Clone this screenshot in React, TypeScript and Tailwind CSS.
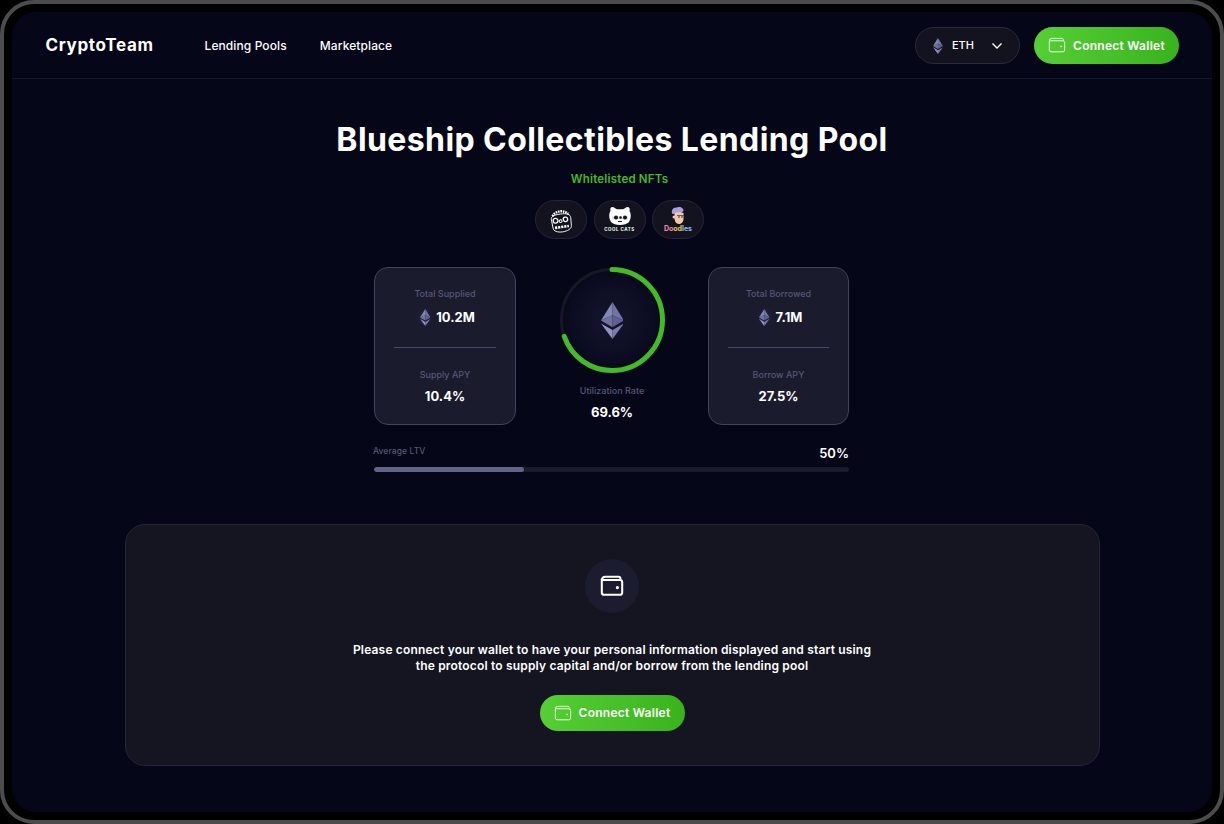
const F = { fontFamily: '"Inter", "Noto Sans", sans-serif' };

function Eth({ size }: { size: number }) {
  return (
    <svg width={size * 0.62} height={size} viewBox="0 0 62 100" className="shrink-0">
      <polygon points="31,0 0,50 31,36" fill="#8487b4" />
      <polygon points="31,0 62,50 31,36" fill="#7275a3" />
      <polygon points="0,50 31,36 31,68" fill="#6f72a0" />
      <polygon points="62,50 31,36 31,68" fill="#5d6090" />
      <polygon points="0,58 31,76 31,100" fill="#9295c2" />
      <polygon points="62,58 31,76 31,100" fill="#7a7dab" />
    </svg>
  );
}

function Wallet({ size = 18, sw = 1.4, color = "#ffffff" }: { size?: number; sw?: number; color?: string }) {
  return (
    <svg width={size} height={size * 0.9} viewBox="0 0 20 18" fill="none" stroke={color} strokeWidth={sw} className="shrink-0">
      <path d="M1.5 4.2V14.5A2 2 0 0 0 3.5 16.5H16.5A2 2 0 0 0 18.5 14.5V6.2A2 2 0 0 0 16.5 4.2H1.5Z" />
      <path d="M1.5 4.2A2.7 2.7 0 0 1 4.2 1.5H15.5A1.5 1.5 0 0 1 17 3V4.2" />
      <circle cx="14.5" cy="10.5" r="0.5" fill={color} />
    </svg>
  );
}

function ConnectButton({ h }: { h: string }) {
  return (
    <div className={`flex w-[145px] items-center justify-center gap-[7px] rounded-full bg-gradient-to-r from-[#56cf36] to-[#39b31c] text-[12px] font-semibold tracking-[0.25px] text-white ${h}`}>
      <Wallet size={18} sw={1.1} color="#e6f9de" />
      <span>Connect Wallet</span>
    </div>
  );
}

function Stat({ label, value, eth = false, gap }: { label: string; value: string; eth?: boolean; gap: string }) {
  return (
    <div className="flex flex-col items-center">
      <div className="text-[9px] font-medium leading-[12px] text-[#555778]">{label}</div>
      <div className={`flex items-center justify-center text-[13px] font-bold leading-[18px] text-white ${gap} ${eth ? "gap-[3px] pl-[2px]" : ""}`}>
        {eth && (
          <span className="flex h-[24px] w-[16px] items-center justify-center rounded-full bg-[radial-gradient(circle,#20213a_0%,#1a1b2c_70%)]">
            <Eth size={17} />
          </span>
        )}
        <span>{value}</span>
      </div>
    </div>
  );
}

function StatCard({ a, b, c, d, w }: { a: string; b: string; c: string; d: string; w: string }) {
  return (
    <div className={`flex h-[158px] flex-col items-center rounded-[14px] border border-[#41435f] bg-[#1a1b2c] px-[19px] pt-[20px] ${w}`}>
      <Stat label={a} value={b} eth gap="mt-[5px]" />
      <div className="mt-[18px] h-px w-full bg-[#45476a]" />
      <div className="mt-[21px]">
        <Stat label={c} value={d} gap="mt-[6px]" />
      </div>
    </div>
  );
}

function Ring() {
  const r = 50.5;
  const c = 2 * Math.PI * r;
  return (
    <div className="relative flex h-[106px] w-[106px] items-center justify-center rounded-full bg-[radial-gradient(circle,#15162e_0%,#0b0c21_55%,#050617_75%)]">
      <svg width="106" height="106" viewBox="0 0 106 106" className="absolute inset-0 -rotate-90">
        <circle cx="53" cy="53" r={r} fill="none" stroke="#171825" strokeWidth="3" />
        <circle cx="53" cy="53" r={r} fill="none" stroke="#42bb26" strokeWidth="5" strokeLinecap="round" strokeDasharray={`${c * 0.696} ${c}`} />
      </svg>
      <Eth size={37} />
    </div>
  );
}

function NftPill({ children }: { children: React.ReactNode }) {
  return (
    <div className="flex h-[39px] w-[52px] flex-col items-center justify-center rounded-full border border-[#24253a] bg-[#12131f]">
      {children}
    </div>
  );
}

export default function App() {
  return (
    <div style={F} className="h-[824px] w-[1224px] overflow-hidden bg-black">
      <div className="h-full w-full rounded-[34px] border-4 border-[#4c4c4c] bg-black p-2">
        <div className="flex h-full w-full flex-col overflow-hidden rounded-[24px] bg-[#050617]">
          <header className="flex h-[67px] shrink-0 items-center border-b border-[#171827] pl-[33.5px] pr-[33px] pt-[1px]">
            <div className="w-[159px] text-[17px] font-bold tracking-[0.65px] text-white">CryptoTeam</div>
            <nav className="flex items-center gap-[33px] text-[12px] font-medium tracking-[0.1px] text-white">
              <span>Lending Pools</span>
              <span>Marketplace</span>
            </nav>
            <div className="ml-auto flex items-center gap-[14px]">
              <div className="flex h-[37px] w-[105px] items-center rounded-full border border-[#292a3d] bg-[#12131f] pl-[17px] pr-[16px]">
                <Eth size={16} />
                <span className="ml-[9px] text-[11px] font-medium text-white">ETH</span>
                <svg width="12" height="8" viewBox="0 0 12 8" fill="none" stroke="#ffffff" strokeWidth="1.4" className="ml-auto">
                  <path d="M1.5 1.5L6 6L10.500 1.5" />
                </svg>
              </div>
              <ConnectButton h="h-[37px]" />
            </div>
          </header>

          <main className="flex flex-1 flex-col items-center">
            <h1 className="mt-[39px] text-[32px] font-bold leading-[44px] tracking-[0.41px] text-white">Blueship Collectibles Lending Pool</h1>
            <div className="ml-[15px] mt-[9px] text-[11.5px] font-semibold leading-[16px] tracking-[0.2px] text-[#42bb26]">Whitelisted NFTs</div>
            <div className="ml-[15px] mt-[13px] flex gap-[6.5px]">
              <NftPill>
                <svg width="28" height="28" viewBox="0 0 28 28" fill="none" stroke="#ffffff" className="rotate-[-8deg]">
                  <path d="M6 9A10.500 10.500 0 0 1 22 9" strokeWidth="2.400" strokeDasharray="1.600 0.800" />
                  <path d="M4.500 12C4.500 9.500 7 8 14 8S24 9.500 24 13L23.500 21C23.500 24 19 26 14 26S5 24 5 21Z" strokeWidth="0.900" />
                  <circle cx="8.500" cy="14" r="2.400" strokeWidth="1.300" fill="#12131f" />
                  <circle cx="13.500" cy="15" r="1.400" strokeWidth="1" />
                  <circle cx="18.500" cy="14" r="2.200" strokeWidth="1.300" fill="#12131f" />
                  <path d="M7 21H21" strokeWidth="2.600" strokeDasharray="2.200 0.900" />
                </svg>
              </NftPill>
              <NftPill>
                <svg width="22" height="19" viewBox="0 0 22 19">
                  <path d="M1.500 5C1 2.500 1.500 1 3.500 1C5 1 6.500 3 8 3.200H14C15.500 3 17 1 18.500 1C20.500 1 21 2.500 20.500 5C22.500 8 22 13 20 16C18 18 15 19 11 19S4 18 2 16C0 13 -0.500 8 1.500 5Z" fill="#ffffff" />
                  <path d="M3 10.500H19V13.500H3Z" fill="#9a9ba8" opacity="0.350" />
                  <circle cx="7" cy="11.500" r="2" fill="#14151f" />
                  <circle cx="11.500" cy="11.500" r="1.300" fill="#14151f" />
                  <circle cx="16" cy="11.500" r="2" fill="#14151f" />
                  <path d="M9 15.500H13" stroke="#14151f" strokeWidth="1" />
                </svg>
                <div className="mt-[2px] text-[4.5px] font-bold leading-[6px] tracking-[0.5px] text-white">COOL CATS</div>
              </NftPill>
              <NftPill>
                <svg width="17" height="19" viewBox="0 0 17 19">
                  <path d="M2.500 8C0.500 5 3 1 7 1.500C10 0 14 2 13.500 5L11 7Z" fill="#a89fe0" />
                  <path d="M4.500 7.500C6 6 11 6 13.500 7V13C13.500 16 11 18 9 18C6 18 4.500 15 4.500 12Z" fill="#f2c9a6" />
                  <path d="M7 9.500H13.500" stroke="#3a2a2a" strokeWidth="0.700" />
                  <circle cx="9" cy="11" r="0.800" fill="#1c1c28" />
                  <circle cx="12" cy="11" r="0.800" fill="#1c1c28" />
                  <circle cx="4" cy="11" r="1.500" fill="#f2c9a6" />
                </svg>
                <div className="text-[7px] font-bold leading-[8px]">
                  <span className="text-[#f08bb8]">Do</span>
                  <span className="text-[#f4c46a]">od</span>
                  <span className="text-[#8fd7a0]">l</span>
                  <span className="text-[#8fb8f0]">es</span>
                </div>
              </NftPill>
            </div>

            <section className="-ml-[1px] mt-[28px] w-[475px]">
              <div className="flex items-start justify-between">
                <StatCard a="Total Supplied" b="10.2M" c="Supply APY" d="10.4%" w="w-[142px]" />
                <div className="flex flex-col items-center">
                  <Ring />
                  <div className="mt-[12px] text-[9px] font-medium leading-[12px] text-[#555778]">Utilization Rate</div>
                  <div className="mt-[6px] text-[13px] font-bold leading-[18px] text-white">69.6%</div>
                </div>
                <StatCard a="Total Borrowed" b="7.1M" c="Borrow APY" d="27.5%" w="w-[141px]" />
              </div>
              <div className="mt-[18px] flex items-start justify-between">
                <span className="-ml-[1px] text-[8.5px] font-medium leading-[16px] tracking-[0.1px] text-[#555778]">Average LTV</span>
                <span className="text-[13px] font-semibold leading-[20px] text-white">50%</span>
              </div>
              <div className="mt-[4px] h-[5px] w-full overflow-hidden rounded-full bg-[#191a2b]">
                <div className="h-full w-[150px] rounded-full bg-[#616389]" />
              </div>
            </section>

            <section className="mt-[52px] flex h-[242px] w-[975px] flex-col items-center rounded-[20px] border border-[#25263a] bg-[#141520] pt-[34px]">
              <div className="flex h-[54px] w-[54px] items-center justify-center rounded-full bg-[#1b1c30]">
                <Wallet size={24} sw={1.7} />
              </div>
              <p className="mt-[29px] text-center text-[12px] font-semibold leading-[16px] tracking-[0.18px] text-white">
                Please connect your wallet to have your personal information displayed and start using
                <br />
                the protocol to supply capital and/or borrow from the lending pool
              </p>
              <div className="mt-[21px]">
                <ConnectButton h="h-[36px]" />
              </div>
            </section>
          </main>
        </div>
      </div>
    </div>
  );
}
